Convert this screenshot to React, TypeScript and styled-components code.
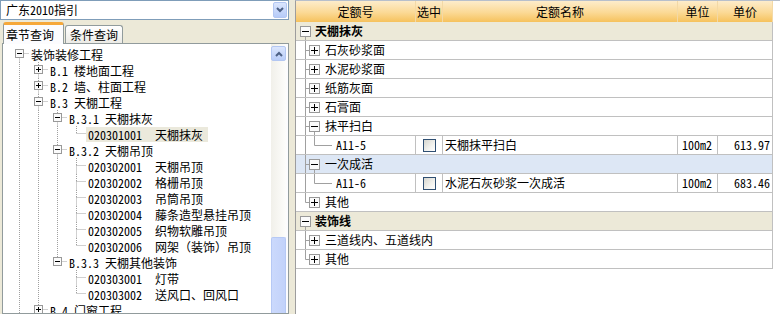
import styled, { createGlobalStyle } from "styled-components"

const GlobalStyle = createGlobalStyle`
  html, body {
    margin: 0;
    padding: 0;
    background: #ece9d8;
  }
  body {
    font-family: "Noto Sans Mono CJK SC", "Noto Sans CJK SC", sans-serif;
    font-size: 12px;
    color: #000;
    overflow: hidden;
  }
`

type TreeNode = {
  depth: number
  code?: string
  text: string
  guides: boolean[]
  first?: boolean
  last?: boolean
  expandable?: boolean
  open?: boolean
  leaf?: boolean
  selected?: boolean
}

const chapterTree: TreeNode[] = [
  { depth: 0, text: "装饰装修工程", guides: [], first: true, expandable: true, open: true },
  { depth: 1, text: "B.1 楼地面工程", guides: [true], expandable: true },
  { depth: 1, text: "B.2 墙、柱面工程", guides: [true], expandable: true },
  { depth: 1, text: "B.3 天棚工程", guides: [true], expandable: true, open: true },
  { depth: 2, text: "B.3.1 天棚抹灰", guides: [true, true], expandable: true, open: true },
  { depth: 3, code: "020301001", text: "天棚抹灰", guides: [true, true, true], last: true, leaf: true, selected: true },
  { depth: 2, text: "B.3.2 天棚吊顶", guides: [true, true], expandable: true, open: true },
  { depth: 3, code: "020302001", text: "天棚吊顶", guides: [true, true, true], leaf: true },
  { depth: 3, code: "020302002", text: "格栅吊顶", guides: [true, true, true], leaf: true },
  { depth: 3, code: "020302003", text: "吊筒吊顶", guides: [true, true, true], leaf: true },
  { depth: 3, code: "020302004", text: "藤条造型悬挂吊顶", guides: [true, true, true], leaf: true },
  { depth: 3, code: "020302005", text: "织物软雕吊顶", guides: [true, true, true], leaf: true },
  { depth: 3, code: "020302006", text: "网架（装饰）吊顶", guides: [true, true, true], last: true, leaf: true },
  { depth: 2, text: "B.3.3 天棚其他装饰", guides: [true, true], last: true, expandable: true, open: true },
  { depth: 3, code: "020303001", text: "灯带", guides: [true, true, false], leaf: true },
  { depth: 3, code: "020303002", text: "送风口、回风口", guides: [true, true, false], last: true, leaf: true },
  { depth: 1, text: "B.4 门窗工程", guides: [true], expandable: true },
]

type GridRow =
  | { kind: "group"; text: string }
  | { kind: "child"; text: string; open?: boolean; last?: boolean; selected?: boolean }
  | { kind: "item"; code: string; name: string; unit: string; price: string }

const quotaRows: GridRow[] = [
  { kind: "group", text: "天棚抹灰" },
  { kind: "child", text: "石灰砂浆面" },
  { kind: "child", text: "水泥砂浆面" },
  { kind: "child", text: "纸筋灰面" },
  { kind: "child", text: "石膏面" },
  { kind: "child", text: "抹平扫白", open: true },
  { kind: "item", code: "A11-5", name: "天棚抹平扫白", unit: "100m2", price: "613.97" },
  { kind: "child", text: "一次成活", open: true, selected: true },
  { kind: "item", code: "A11-6", name: "水泥石灰砂浆一次成活", unit: "100m2", price: "683.46" },
  { kind: "child", text: "其他", last: true },
  { kind: "group", text: "装饰线" },
  { kind: "child", text: "三道线内、五道线内" },
  { kind: "child", text: "其他", last: true },
]

const COLUMNS = "120px 27px 235px 40px 55px"

const Window = styled.div`
  display: flex;
  width: 780px;
  height: 314px;
  background: #ece9d8;
  overflow: hidden;
`

const LeftPane = styled.div`
  width: 289px;
  flex-shrink: 0;
  display: flex;
  flex-direction: column;
`

const Combo = styled.div`
  height: 20px;
  box-sizing: border-box;
  border: 1px solid #7f9db9;
  background: #fff;
  display: flex;
  align-items: center;
  padding: 0 1px 0 5px;
`

const ComboText = styled.span`
  flex: 1;
  line-height: 18px;
`

const ComboButton = styled.span`
  width: 14px;
  height: 16px;
  box-sizing: border-box;
  border: 1px solid #b3c7f2;
  border-radius: 2px;
  background: linear-gradient(to bottom, #dbe6fd, #b6cbf8);
  display: flex;
  align-items: center;
  justify-content: center;
`

const TabStrip = styled.div`
  height: 23px;
  display: flex;
  align-items: flex-end;
  padding-left: 3px;
  gap: 1px;
`

const Tab = styled.div<{ $active?: boolean }>`
  box-sizing: border-box;
  height: ${(p) => (p.$active ? "22px" : "18px")};
  padding: ${(p) => (p.$active ? "0 9px 0 2px" : "0 4px")};
  border: 1px solid #919b9c;
  border-bottom: none;
  border-top: ${(p) => (p.$active ? "3px solid #f6a83a" : "1px solid #919b9c")};
  border-radius: 3px 3px 0 0;
  background: ${(p) =>
    p.$active ? "#fcfcfe" : "linear-gradient(to bottom, #ffffff, #ecebe6)"};
  margin-bottom: ${(p) => (p.$active ? "-1px" : "0")};
  position: relative;
  z-index: ${(p) => (p.$active ? 1 : 0)};
  display: flex;
  align-items: center;
  line-height: 16px;
`

const TabPanel = styled.div`
  flex: 1;
  min-height: 0;
  margin-left: 2px;
  border: 1px solid #919b9c;
  background: #fcfcfe;
  display: flex;
  padding: 0 2px 0 0;
`

const Tree = styled.div`
  flex: 1;
  min-width: 0;
  overflow: hidden;
  background: #fff;
  padding: 2px 0 0 7px;
`

const TreeRow = styled.div`
  display: flex;
  align-items: center;
  height: 16px;
  white-space: nowrap;
`

const TreeLabel = styled.span<{ $selected?: boolean }>`
  display: flex;
  height: 15px;
  line-height: 15px;
  padding: 0 5px 0 2px;
  background: ${(p) => (p.$selected ? "#ebe9dc" : "transparent")};
`

const LeafCode = styled.span`
  width: 67px;
  flex-shrink: 0;
`

const Scrollbar = styled.div`
  width: 15px;
  flex-shrink: 0;
  display: flex;
  flex-direction: column;
  padding-top: 2px;
  background: linear-gradient(to right, #f1f0ea, #fdfdfb);
`

const ScrollButton = styled.div`
  height: 15px;
  box-sizing: border-box;
  border: 1px solid #b3c7f2;
  border-radius: 2px;
  background: linear-gradient(to bottom, #dbe6fd, #b9cdf8);
  display: flex;
  align-items: center;
  justify-content: center;
`

const ScrollThumb = styled.div<{ $offset: number }>`
  flex: 1;
  margin-top: ${(p) => p.$offset}px;
  box-sizing: border-box;
  border: 1px solid #b6c9f5;
  border-bottom: none;
  border-radius: 2px 2px 0 0;
  background: linear-gradient(to right, #cbd9fc, #c2d2fa);
`

const Splitter = styled.div`
  width: 6px;
  flex-shrink: 0;
  background: #ece9d8;
`

const RightPane = styled.div`
  flex: 1;
  background: #fff;
  border-left: 1px solid #9d9d9d;
  border-top: 1px solid #b7bfcb;
  display: flex;
  flex-direction: column;
`

const Table = styled.div`
  width: 477px;
  display: flex;
  flex-direction: column;
`

const HeaderRow = styled.div`
  display: grid;
  grid-template-columns: ${COLUMNS};
  height: 21px;
  background: linear-gradient(to bottom, #fdeccb 0%, #fbd995 55%, #f6c25d 100%);
`

const HeaderCell = styled.div`
  border-right: 1px solid #f3d9a6;
  display: flex;
  align-items: center;
  justify-content: center;
  line-height: 20px;
`

const Row = styled.div<{ $tone: "group" | "selected" | "plain" }>`
  display: grid;
  grid-template-columns: ${COLUMNS};
  height: 19px;
  box-sizing: border-box;
  border-bottom: 1px solid #c0c0c0;
  background: ${(p) =>
    p.$tone === "group" ? "#ece9d8" : p.$tone === "selected" ? "#dde7f5" : "#fff"};
`

const Cell = styled.div<{ $align?: "left" | "center" | "right"; $pad?: number }>`
  border-right: 1px solid #c0c0c0;
  display: flex;
  align-items: center;
  justify-content: ${(p) =>
    p.$align === "center" ? "center" : p.$align === "right" ? "flex-end" : "flex-start"};
  padding: ${(p) =>
    p.$align === "right" ? `0 ${p.$pad ?? 2}px 0 0` : `0 0 0 ${p.$pad ?? 0}px`};
  overflow: hidden;
  white-space: nowrap;
  line-height: 18px;
`

const SpanCell = styled(Cell)`
  grid-column: 1 / -1;
`

const RowText = styled.span<{ $bold?: boolean }>`
  margin-left: 2px;
  font-weight: ${(p) => (p.$bold ? 700 : 400)};
`

const CheckBox = styled.span`
  width: 13px;
  height: 13px;
  box-sizing: border-box;
  border: 1px solid #2f4f72;
  background: linear-gradient(135deg, #d6d6cf 0%, #f2f2ee 60%, #ffffff 100%);
`

const Chevron = ({ up }: { up?: boolean }) => (
  <svg width="8" height="6" viewBox="0 0 8 6">
    <polyline
      points={up ? "1,5 4,2 7,5" : "1,1 4,4 7,1"}
      fill="none"
      stroke="#4d6185"
      strokeWidth="2"
    />
  </svg>
)

const ExpandBox = ({ cx, cy, half, open }: { cx: number; cy: number; half: number; open?: boolean }) => (
  <g>
    <rect
      x={cx - half}
      y={cy - half}
      width={half * 2}
      height={half * 2}
      fill="#fbfbfb"
      stroke="#999999"
    />
    <rect x={cx - half + 1.5} y={cy - 0.5} width={half * 2 - 3} height="1" fill="#000" />
    {!open && (
      <rect x={cx - 0.5} y={cy - half + 1.5} width="1" height={half * 2 - 3} fill="#000" />
    )}
  </g>
)

const dotted = { stroke: "#a0a0a0", strokeDasharray: "1 1" }

const TreeGutter = ({ node }: { node: TreeNode }) => {
  const width = (node.depth + 1) * 19
  const cx = 9.5 + 19 * node.depth
  const cy = 7.5

  return (
    <svg width={width} height="16" style={{ flexShrink: 0 }}>
      {node.guides.map((on, k) =>
        on ? <line key={k} x1={9.5 + 19 * k} y1="0" x2={9.5 + 19 * k} y2="16" {...dotted} /> : null,
      )}
      {!node.first && <line x1={cx} y1="0" x2={cx} y2={cy} {...dotted} />}
      {!node.last && <line x1={cx} y1={cy} x2={cx} y2="16" {...dotted} />}
      <line x1={cx} y1={cy} x2={width} y2={cy} {...dotted} />
      {node.expandable && <ExpandBox cx={cx} cy={cy} half={4} open={node.open} />}
    </svg>
  )
}

const solid = { stroke: "#a0a0a0" }

const GridGutter = ({ row }: { row: GridRow }) => {
  const c0 = 9.5
  const c1 = 18.5
  const cy = 9.5

  if (row.kind === "group") {
    return (
      <svg width="17" height="18" style={{ flexShrink: 0 }}>
        <line x1={c0} y1={cy} x2={c0} y2="18" {...solid} />
        <ExpandBox cx={c0} cy={cy} half={5} open />
      </svg>
    )
  }

  if (row.kind === "child") {
    return (
      <svg width="27" height="18" style={{ flexShrink: 0 }}>
        <line x1={c0} y1="0" x2={c0} y2={row.last ? cy : 18} {...solid} />
        <line x1={c0} y1={cy} x2={c1} y2={cy} {...solid} />
        {row.open && <line x1={c1} y1={cy} x2={c1} y2="18" {...solid} />}
        <ExpandBox cx={c1} cy={cy} half={5} open={row.open} />
      </svg>
    )
  }

  return (
    <svg width="38" height="18" style={{ flexShrink: 0 }}>
      <line x1={c0} y1="0" x2={c0} y2="18" {...solid} />
      <line x1={c1} y1="0" x2={c1} y2={cy} {...solid} />
      <line x1={c1} y1={cy} x2="36" y2={cy} {...solid} />
    </svg>
  )
}

const QuotaRow = ({ row }: { row: GridRow }) => {
  if (row.kind === "item") {
    return (
      <Row $tone="plain">
        <Cell>
          <GridGutter row={row} />
          <RowText>{row.code}</RowText>
        </Cell>
        <Cell $align="center">
          <CheckBox />
        </Cell>
        <Cell $pad={2}>{row.name}</Cell>
        <Cell $pad={4}>{row.unit}</Cell>
        <Cell $align="right" $pad={2}>
          {row.price}
        </Cell>
      </Row>
    )
  }

  const tone = row.kind === "group" ? "group" : row.selected ? "selected" : "plain"

  return (
    <Row $tone={tone}>
      <SpanCell>
        <GridGutter row={row} />
        <RowText $bold={row.kind === "group"}>{row.text}</RowText>
      </SpanCell>
    </Row>
  )
}

const App = () => (
  <>
    <GlobalStyle />
    <Window>
      <LeftPane>
        <Combo>
          <ComboText>广东2010指引</ComboText>
          <ComboButton>
            <Chevron />
          </ComboButton>
        </Combo>
        <TabStrip>
          <Tab $active>章节查询</Tab>
          <Tab>条件查询</Tab>
        </TabStrip>
        <TabPanel>
          <Tree>
            {chapterTree.map((node, i) => (
              <TreeRow key={i}>
                <TreeGutter node={node} />
                <TreeLabel $selected={node.selected}>
                  {node.leaf && <LeafCode>{node.code}</LeafCode>}
                  <span>{node.text}</span>
                </TreeLabel>
              </TreeRow>
            ))}
          </Tree>
          <Scrollbar>
            <ScrollButton>
              <Chevron up />
            </ScrollButton>
            <ScrollThumb $offset={176} />
          </Scrollbar>
        </TabPanel>
      </LeftPane>
      <Splitter />
      <RightPane>
        <Table>
          <HeaderRow>
            <HeaderCell>定额号</HeaderCell>
            <HeaderCell>选中</HeaderCell>
            <HeaderCell>定额名称</HeaderCell>
            <HeaderCell>单位</HeaderCell>
            <HeaderCell>单价</HeaderCell>
          </HeaderRow>
          {quotaRows.map((row, i) => (
            <QuotaRow key={i} row={row} />
          ))}
        </Table>
      </RightPane>
    </Window>
  </>
)

export default App
